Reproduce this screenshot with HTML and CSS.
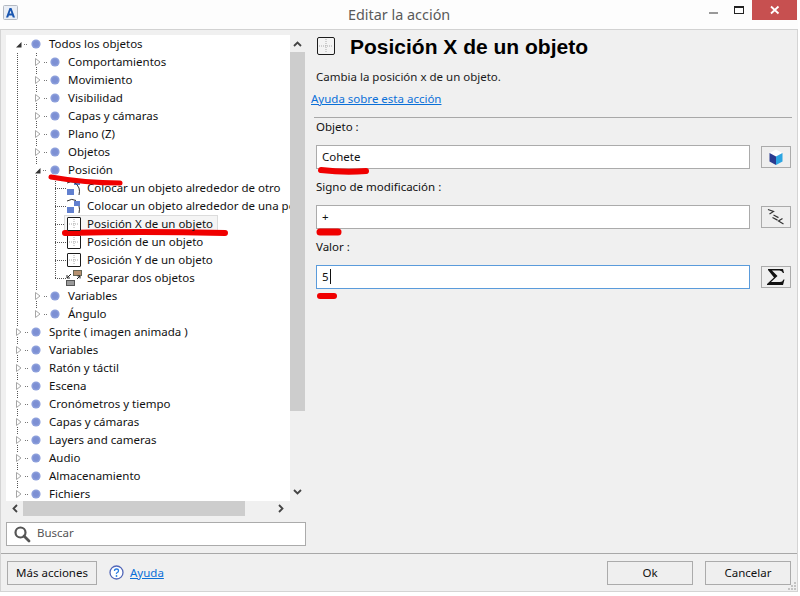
FILE: index.html
```html
<!DOCTYPE html>
<html lang="es">
<head>
<meta charset="utf-8">
<title>Editar la acción</title>
<link rel="stylesheet" href="styles.css">
</head>
<body>
<svg class="defs" width="0" height="0" aria-hidden="true">
  <symbol id="open" viewBox="0 0 16 8"><path d="M1 7.500h5.500V2z" fill="#333"/><path d="M9 4.500h3" stroke="#777" stroke-dasharray="1 1"/></symbol>
  <symbol id="closed" viewBox="0 0 16 10"><path d="M1.500 1.500v7l4.500-3.500z" fill="#fff" stroke="#a6a6a6"/><path d="M10 5.500h3.500" stroke="#777" stroke-dasharray="1 1"/></symbol>
  <symbol id="dot" viewBox="0 0 10 10"><circle cx="5" cy="5" r="4.600" fill="#8b9edb"/><circle cx="5" cy="5" r="3" fill="#7d90d4"/></symbol>
  <symbol id="pos" viewBox="0 0 16 16"><rect x="1.500" y="1.500" width="13" height="13" rx=".5" fill="#fff" stroke="#1c1c1c"/><path d="M8 3v10M3 8h10" stroke="#aaa" stroke-dasharray="1 1"/></symbol>
  <symbol id="orbit1" viewBox="0 0 16 16"><rect x="1" y="9" width="7" height="6" fill="#6180cf"/><rect x="8" y="1" width="6" height="4" fill="#6180cf"/><path d="M1 3Q9-1 13 8q1 3 0 7" fill="none" stroke="#333" stroke-width="1"/></symbol>
  <symbol id="orbit2" viewBox="0 0 16 16"><rect x="1" y="9" width="7" height="6" fill="#6180cf"/><rect x="8" y="3" width="6" height="5" fill="#6180cf"/><path d="M1 3Q6 0 10 2.500M13 8q1 3 0 7" fill="none" stroke="#333" stroke-width="1"/></symbol>
  <symbol id="split" viewBox="0 0 16 16"><rect x="7.500" y=".5" width="8" height="5" fill="#b5906f" stroke="#665"/><rect x=".5" y="10.500" width="8" height="5" fill="#9a9a9a" stroke="#555"/><path d="M5 4 1 8M1 5v3h3M11 9l3-3M11.500 6H14v2.500" fill="none" stroke="#222"/></symbol>
</svg>
<div class="window">
  <header class="titlebar">
    <svg class="app-icon" width="16" height="16" viewBox="0 0 16 16"><rect x=".5" y=".5" width="14" height="14" rx="1" fill="#e9eef6" stroke="#b5bac2"/><path d="M3 12.500 6.500 3h2L12 12.500h-2.200l-.7-2H5.900l-.7 2zM6.500 8.500h2L7.500 5.500z" fill="#1a56b0"/></svg>
    <span class="window-title">Editar la acción</span>
    <div class="caption">
      <span class="cap-btn"><i class="cap-min"></i></span>
      <span class="cap-btn"><i class="cap-max"></i></span>
      <span class="cap-close"><svg width="10" height="10" viewBox="0 0 10 10"><path d="M1 1.500 8.500 8.500M8.500 1.500 1 8.500" stroke="#fff" stroke-width="1.800"/></svg></span>
    </div>
  </header>
  <div class="body">
    <aside class="left">
      <div class="tree-box">
        <div class="tree-row-wrap">
          <div class="tree">
            <div class="group g0">
              <div class="row d0"><svg class="tg"><use href="#open"/></svg><svg class="dot"><use href="#dot"/></svg><span>Todos los objetos</span></div>
              <div class="group g1">
                <div class="row d1"><svg class="tg"><use href="#closed"/></svg><svg class="dot"><use href="#dot"/></svg><span>Comportamientos</span></div>
                <div class="row d1"><svg class="tg"><use href="#closed"/></svg><svg class="dot"><use href="#dot"/></svg><span>Movimiento</span></div>
                <div class="row d1"><svg class="tg"><use href="#closed"/></svg><svg class="dot"><use href="#dot"/></svg><span>Visibilidad</span></div>
                <div class="row d1"><svg class="tg"><use href="#closed"/></svg><svg class="dot"><use href="#dot"/></svg><span>Capas y cámaras</span></div>
                <div class="row d1"><svg class="tg"><use href="#closed"/></svg><svg class="dot"><use href="#dot"/></svg><span>Plano (Z)</span></div>
                <div class="row d1"><svg class="tg"><use href="#closed"/></svg><svg class="dot"><use href="#dot"/></svg><span>Objetos</span></div>
                <div class="row d1"><svg class="tg"><use href="#open"/></svg><svg class="dot"><use href="#dot"/></svg><span>Posición</span></div>
                <div class="group g2">
                  <div class="row d2"><i class="conn"></i><svg class="leaf"><use href="#orbit1"/></svg><span>Colocar un objeto alrededor de otro</span></div>
                  <div class="row d2"><i class="conn"></i><svg class="leaf"><use href="#orbit2"/></svg><span>Colocar un objeto alrededor de una posición</span></div>
                  <div class="row d2 selected"><i class="conn"></i><svg class="leaf"><use href="#pos"/></svg><span>Posición X de un objeto</span></div>
                  <div class="row d2"><i class="conn"></i><svg class="leaf"><use href="#pos"/></svg><span>Posición de un objeto</span></div>
                  <div class="row d2"><i class="conn"></i><svg class="leaf"><use href="#pos"/></svg><span>Posición Y de un objeto</span></div>
                  <div class="row d2"><i class="conn"></i><svg class="leaf"><use href="#split"/></svg><span>Separar dos objetos</span></div>
                </div>
                <div class="row d1"><svg class="tg"><use href="#closed"/></svg><svg class="dot"><use href="#dot"/></svg><span>Variables</span></div>
                <div class="row d1"><svg class="tg"><use href="#closed"/></svg><svg class="dot"><use href="#dot"/></svg><span>Ángulo</span></div>
              </div>
              <div class="row d0"><svg class="tg"><use href="#closed"/></svg><svg class="dot"><use href="#dot"/></svg><span>Sprite ( imagen animada )</span></div>
              <div class="row d0"><svg class="tg"><use href="#closed"/></svg><svg class="dot"><use href="#dot"/></svg><span>Variables</span></div>
              <div class="row d0"><svg class="tg"><use href="#closed"/></svg><svg class="dot"><use href="#dot"/></svg><span>Ratón y táctil</span></div>
              <div class="row d0"><svg class="tg"><use href="#closed"/></svg><svg class="dot"><use href="#dot"/></svg><span>Escena</span></div>
              <div class="row d0"><svg class="tg"><use href="#closed"/></svg><svg class="dot"><use href="#dot"/></svg><span>Cronómetros y tiempo</span></div>
              <div class="row d0"><svg class="tg"><use href="#closed"/></svg><svg class="dot"><use href="#dot"/></svg><span>Capas y cámaras</span></div>
              <div class="row d0"><svg class="tg"><use href="#closed"/></svg><svg class="dot"><use href="#dot"/></svg><span>Layers and cameras</span></div>
              <div class="row d0"><svg class="tg"><use href="#closed"/></svg><svg class="dot"><use href="#dot"/></svg><span>Audio</span></div>
              <div class="row d0"><svg class="tg"><use href="#closed"/></svg><svg class="dot"><use href="#dot"/></svg><span>Almacenamiento</span></div>
              <div class="row d0"><svg class="tg"><use href="#closed"/></svg><svg class="dot"><use href="#dot"/></svg><span>Fichiers</span></div>
            </div>
          </div>
          <div class="vscroll">
            <svg width="15" height="17" viewBox="0 0 15 17"><path d="M4 11l3.500-3.500L11 11" fill="none" stroke="#444" stroke-width="1.800"/></svg>
            <div class="vthumb"></div>
            <svg width="15" height="17" viewBox="0 0 15 17"><path d="M4 6l3.500 3.500L11 6" fill="none" stroke="#444" stroke-width="1.800"/></svg>
          </div>
        </div>
        <div class="hscroll">
          <svg width="17" height="15" viewBox="0 0 17 15"><path d="M11 4 7.500 7.500 11 11" fill="none" stroke="#444" stroke-width="1.800"/></svg>
          <div class="hthumb"></div>
          <svg class="hright" width="17" height="15" viewBox="0 0 17 15"><path d="M6 4l3.500 3.500L6 11" fill="none" stroke="#444" stroke-width="1.800"/></svg>
        </div>
      </div>
      <div class="search">
        <svg width="18" height="18" viewBox="0 0 18 18"><circle cx="7.500" cy="7.500" r="5" fill="none" stroke="#555" stroke-width="2.200"/><path d="M11 11l5 5" stroke="#555" stroke-width="2.800" stroke-linecap="round"/></svg>
        <span>Buscar</span>
      </div>
    </aside>
    <main class="right">
      <div class="head">
        <svg class="head-icon" width="20" height="20" viewBox="0 0 20 20"><rect x="1.500" y="1.500" width="17" height="17" rx="1.500" fill="#f4f4f4" stroke="#1c1c1c"/><path d="M10 3v14M3 10h14" stroke="#aaa" stroke-dasharray="1 1"/></svg>
        <h1>Posición X de un objeto</h1>
      </div>
      <p class="desc">Cambia la posición x de un objeto.</p>
      <a class="help-link" href="#">Ayuda sobre esta acción</a>
      <hr class="rule">
      <label class="field-label">Objeto :</label>
      <div class="field">
        <div class="input">Cohete</div>
        <button class="icon-btn"><svg width="18" height="18" viewBox="0 0 18 18"><path d="M9 1.500 15.500 5 9 8.500 2.500 5z" fill="#fff"/><path d="M2.500 5 9 8.500V17L2.500 13.500z" fill="#2b3a8f"/><path d="M15.500 5 9 8.500V17l6.500-3.500z" fill="#2ca5e2"/></svg></button>
      </div>
      <label class="field-label">Signo de modificación :</label>
      <div class="field">
        <div class="input">+</div>
        <button class="icon-btn"><svg width="18" height="18" viewBox="0 0 18 18"><path d="M1 1.500 6.500 3.500 2.500 6M6.500 7l5 2.600M5.500 9.500l5 2.600M15.500 10.500 11.500 13 16.500 16" fill="none" stroke="#333" stroke-width="1.200"/></svg></button>
      </div>
      <label class="field-label">Valor :</label>
      <div class="field">
        <div class="input focused">5<i class="caret"></i></div>
        <button class="icon-btn"><svg width="18" height="16" viewBox="0 0 18 16"><path d="M1 0h15l1 4h-1q-1-2.500-3.500-2.500H5l5.500 5.500L4 13h9q2.500 0 3.500-2.500h1L16 16H0v-1l7-6.500L1 1z" fill="#111"/></svg></button>
      </div>
    </main>
  </div>
  <footer class="footer">
    <button class="btn more">Más acciones</button>
    <svg class="help-icon" width="15" height="15" viewBox="0 0 15 15"><circle cx="7.500" cy="7.500" r="6.500" fill="#fff" stroke="#5267b8" stroke-width="1.300"/><path d="M5.500 6Q5.500 4 7.500 4t2 1.800Q9.500 7 8.300 7.500T7.500 9" fill="none" stroke="#2a7de1" stroke-width="1.300"/><circle cx="7.500" cy="11" r=".9" fill="#2a7de1"/></svg>
    <a class="help-link footer-link" href="#">Ayuda</a>
    <button class="btn ok">Ok</button>
    <button class="btn">Cancelar</button>
    <svg class="grip" width="9" height="9" viewBox="0 0 9 9"><path d="M6 0h2v2H6zM3 3h2v2H3zM6 3h2v2H6zM0 6h2v2H0zM3 6h2v2H3zM6 6h2v2H6z" fill="#c4c4c4"/></svg>
  </footer>
  <svg class="marks" width="800" height="596" viewBox="0 0 800 596" aria-hidden="true">
    <g fill="none" stroke="#f00000" stroke-linecap="round">
      <path d="M51 177Q85 183 120 183" stroke-width="5"/>
      <path d="M65 233Q140 231 225 233" stroke-width="6"/>
      <path d="M321 170Q345 173 366 171" stroke-width="6"/>
      <path d="M320 232H338" stroke-width="7"/>
      <path d="M320 296H334" stroke-width="6"/>
    </g>
  </svg>
</div>
</body>
</html>
```
FILE: styles.css
```css
* { box-sizing: border-box; }
html, body { margin: 0; height: 100%; background: #fff; }
body { font: 11.5px/18px "Noto Sans", sans-serif; color: #111; overflow: hidden; }
.defs { position: absolute; }
.window {
  position: relative;
  width: 798px;
  height: 592px;
  background: #f0f0f0;
  border-left: 1px solid #d4d4d4;
  border-right: 1px solid #d4d4d4;
  border-bottom: 1px solid #d4d4d4;
  display: flex;
  flex-direction: column;
}
.titlebar {
  height: 30px;
  flex: none;
  background: #fdfdfd;
  border-bottom: 1px solid #d2d2d2;
  margin: 0 -1px;
  display: flex;
  align-items: flex-start;
  position: relative;
}
.app-icon { margin: 5px 0 0 3px; }
.window-title {
  position: absolute;
  left: 348px;
  top: 5px;
  font-size: 14.4px;
  line-height: 20px;
  color: #5a5a5a;
}
.caption { margin-left: auto; display: flex; margin-right: 1px; }
.cap-btn { width: 26px; height: 20px; display: flex; align-items: center; justify-content: center; }
.cap-min { width: 9px; height: 2px; background: #999; margin-top: 6px; }
.cap-max { width: 10px; height: 8px; border: 1px solid #222; border-top-width: 2px; margin-top: -1px; }
.cap-close { width: 45px; height: 20px; background: #c75050; display: flex; align-items: center; justify-content: center; }
.body { flex: 1; display: flex; min-height: 0; }
.left { width: 304px; flex: none; padding: 5px 0 0 5px; display: flex; flex-direction: column; }
.tree-box { width: 299px; }
.tree-row-wrap { display: flex; height: 466px; }
.tree { width: 284px; height: 466px; background: #fff; overflow: hidden; }
.group { position: relative; }
.group::before { content: ""; position: absolute; top: 18px; bottom: 9px; border-left: 1px dotted #555; }
.g0::before { left: 11px; }
.g1::before { left: 30px; top: 0; }
.g2::before { left: 49px; top: 0; }
.row {
  position: relative;
  height: 18px;
  display: flex;
  align-items: center;
  white-space: nowrap;
}
.row span { position: relative; }
.d0 { padding-left: 9px; }
.d1 { padding-left: 28px; }
.d2 { padding-left: 49px; }
.tg { width: 16px; height: 10px; flex: none; background: #fff; }
.dot { width: 10px; height: 10px; flex: none; margin-right: 8px; position: relative; }
.conn { width: 11px; flex: none; border-top: 1px dotted #555; }
.leaf { width: 16px; height: 16px; flex: none; margin-right: 5px; position: relative; }
.selected::after {
  content: "";
  position: absolute;
  left: 58px;
  top: 0;
  width: 152px;
  height: 18px;
  background: #f5f5f5;
  border: 1px solid #dcdcdc;
}
.selected > .leaf, .selected > span { z-index: 1; }
.vscroll { width: 15px; display: flex; flex-direction: column; background: #f0f0f0; }
.vthumb { flex: none; height: 359px; background: #cdcdcd; margin-bottom: 73px; }
.hscroll { height: 15px; display: flex; align-items: center; background: #f0f0f0; width: 284px; }
.hthumb { width: 222px; height: 15px; background: #cdcdcd; }
.hright { margin-left: auto; }
.search {
  margin-top: 6px;
  width: 300px;
  height: 24px;
  background: #fff;
  border: 1px solid #ababab;
  display: flex;
  align-items: center;
  gap: 6px;
  padding-left: 6px;
  color: #555;
}
.search span { padding-bottom: 2px; }
.right { flex: 1; padding: 5px 6px 0 10px; min-width: 0; }
.head { display: flex; align-items: center; height: 24px; }
.head-icon { margin-left: 1px; margin-top: -2px; }
h1 { margin: 0 0 0 14px; font: bold 21px/24px "Liberation Sans", sans-serif; color: #000; }
.desc { margin: 9px 0 0 1px; height: 18px; color: #1a1a1a; }
.help-link { color: #0a6fd8; text-decoration: underline; }
.right > .help-link { display: block; margin: 4px 0 0 -4px; height: 18px; width: max-content; }
.rule { margin: 9px 0 0 -1px; width: 478px; border: 0; border-top: 1px solid #a8a8a8; height: 1px; }
.field-label { display: block; height: 18px; margin-left: 1px; }
.field { display: flex; align-items: center; gap: 11px; height: 24px; margin: 9px 0 9px; }
.input {
  width: 434px;
  height: 24px;
  margin-left: 1px;
  background: #fff;
  border: 1px solid #ababab;
  padding: 0 0 2px 5px;
  line-height: 21px;
  display: flex;
  align-items: center;
}
.focused { border-color: #5a9bdb; }
.caret { display: inline-block; width: 1px; height: 15px; background: #111; margin-left: 1px; }
.icon-btn {
  width: 30px;
  height: 22px;
  padding: 0;
  background: #efefef;
  border: 1px solid #ababab;
  display: flex;
  align-items: center;
  justify-content: center;
}
.footer {
  flex: none;
  height: 38px;
  margin-top: auto;
  border-top: 1px solid #a8a8a8;
  display: flex;
  align-items: center;
  padding: 0 6px 0 6px;
  position: relative;
}
.btn {
  height: 24px;
  width: 86px;
  padding: 0;
  font: inherit;
  color: #111;
  background: #efefef;
  border: 1px solid #ababab;
}
.more { width: 90px; }
.help-icon { margin-left: 12px; }
.footer-link { margin-left: 6px; }
.ok { margin-left: auto; margin-right: 12px; }
.grip { position: absolute; right: 0; bottom: 0; }
.marks { position: absolute; left: -1px; top: 0; pointer-events: none; }
```
